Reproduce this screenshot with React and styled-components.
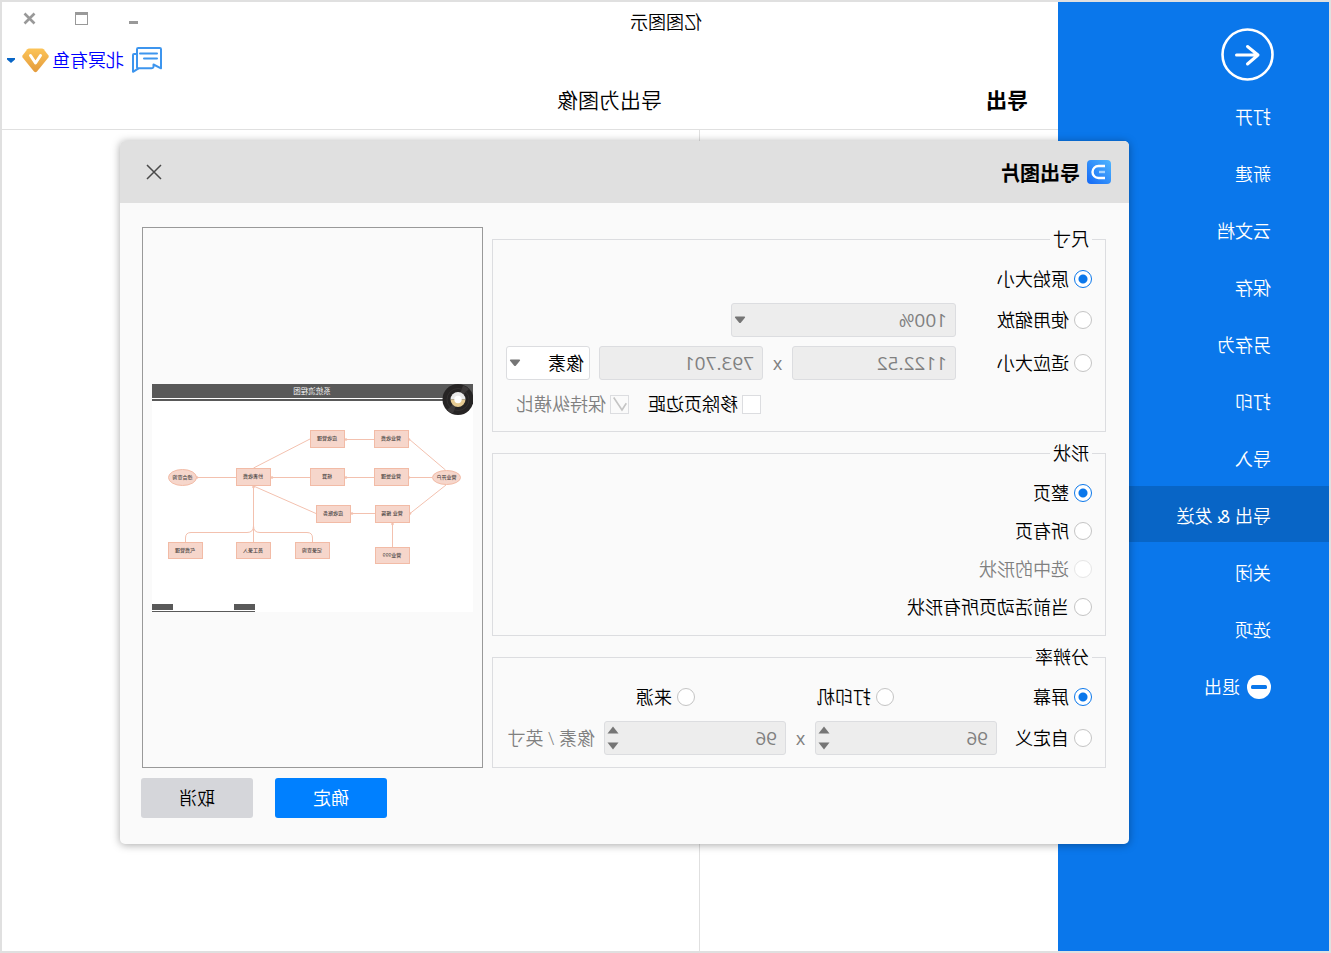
import React, { useState } from 'react';
import styled, { createGlobalStyle } from 'styled-components';

const GlobalStyle = createGlobalStyle`
  * {
    box-sizing: border-box;
  }

  body {
    margin: 0;
    background-color: #fff;
  }

  body, button, input, select {
    font-family: "Open Sans", "Noto Sans CJK SC", sans-serif;
    font-size: 18px;
    font-weight: 350;
    line-height: 24px;
  }
`;

// the whole window is shown flipped, everything inside is written left to right
const Window = styled.div`
  display: flex;
  position: relative;
  min-height: 100vh;
  border: 2px solid #e0e0e0;
  background-color: #fff;
  color: #000;
  transform: scaleX(-1);
`;

const Sidebar = styled.aside`
  flex: 0 0 271px;
  padding-top: 26px;
  background-color: #0a77eb;
`;

const BackButton = styled.button`
  display: block;
  margin: 0 0 6px 55px;
  padding: 0;
  border: none;
  background: none;
  line-height: 0;
`;

const MenuItem = styled.a`
  display: flex;
  align-items: center;
  gap: 7px;
  height: 56px;
  margin-bottom: 1px;
  padding: 4px 0 0 58px;
  background-color: ${(props) => (props.$active ? '#0865c6' : 'transparent')};
  color: #fff;
  text-decoration: none;
`;

const Ampersand = styled.span`
  font-weight: 400;
`;

const Main = styled.main`
  display: flex;
  flex-direction: column;
  flex: 1;
`;

const TitleBar = styled.div`
  display: flex;
  justify-content: space-between;
  height: 40px;
  padding: 0 2px 0 356px;
  line-height: 40px;
`;

const WindowButtons = styled.div`
  display: flex;
  height: 33px;
`;

const WindowButton = styled.button`
  display: flex;
  align-items: center;
  justify-content: center;
  width: 52px;
  padding: 0;
  border: none;
  background: none;
`;

const Account = styled.div`
  display: flex;
  align-items: center;
  justify-content: flex-end;
  gap: 3px;
  height: 36px;
  padding-right: 4px;
`;

const AccountLink = styled.a`
  margin-left: 5px;
  color: #0000ff;
  text-decoration: none;
`;

const Headings = styled.div`
  display: grid;
  grid-template-columns: 359px 1fr;
  height: 52px;
  border-bottom: 1px solid #e0e0e0;
`;

const Heading = styled.h1`
  margin: 0;
  padding-left: ${(props) => (props.$main ? '30px' : '37px')};
  font-size: 21px;
  font-weight: ${(props) => (props.$main ? 700 : 350)};
  line-height: 44px;
`;

const Columns = styled.div`
  display: grid;
  grid-template-columns: 359px 1fr;
  flex: 1;
`;

const ListColumn = styled.div`
  border-right: 1px solid #e0e0e0;
`;

const Dialog = styled.section`
  position: absolute;
  top: 139px;
  left: 200px;
  right: 118px;
  border-radius: 5px;
  background-color: #fafafa;
  box-shadow: 0 1px 8px rgba(0, 0, 0, 0.35);
`;

const DialogHeader = styled.header`
  display: flex;
  align-items: center;
  gap: 7px;
  height: 62px;
  padding: 0 26px 0 18px;
  border-radius: 5px 5px 0 0;
  background-color: #e0e0e0;
`;

const DialogTitle = styled.h2`
  flex: 1;
  margin: 0;
  padding-top: 3px;
  font-size: 20px;
  font-weight: 700;
`;

const CloseButton = styled.button`
  padding: 0;
  border: none;
  background: none;
  line-height: 0;
`;

const DialogBody = styled.div`
  display: flex;
  gap: 9px;
  padding: 24px 22px 0 23px;
`;

const Groups = styled.div`
  display: flex;
  flex-direction: column;
  flex: 1;
  gap: 9px;
  min-width: 0;
`;

const Group = styled.fieldset`
  min-width: 0;
  margin: 0;
  padding: 0 13px;
  border: 1px solid #dcdde0;
`;

const Legend = styled.legend`
  padding: 0 3px;
  line-height: 24px;
`;

const Rows = styled.div`
  display: flex;
  flex-direction: column;
  gap: ${(props) => (props.$list ? '0' : '9px')};
  padding: ${(props) => (props.$list ? '9px 0' : '12px 0')};
`;

const Row = styled.div`
  display: flex;
  align-items: center;
  min-height: ${(props) => (props.$tall ? '38px' : '31px')};
`;

const RadioLabel = styled.label`
  display: flex;
  align-items: center;
  flex: none;
  gap: 5px;
  width: ${(props) => props.$width || 'auto'};
  color: ${(props) => (props.$muted ? '#808080' : '#000')};
`;

const Radio = styled.input.attrs({ type: 'radio' })`
  appearance: none;
  flex: none;
  width: 18px;
  height: 18px;
  margin: 0;
  border: 1px solid #c4c4c4;
  border-radius: 50%;
  background-color: #fff;

  &:checked {
    border-color: #0a77eb;
    background-image: radial-gradient(circle, #0a77eb 4px, #fff 5px);
  }

  &:disabled {
    border-color: #e6e6e6;
  }
`;

const Checks = styled.div`
  display: flex;
  align-items: center;
  justify-content: flex-end;
  gap: 19px;
  height: 30px;
  padding-right: 10px;
`;

const CheckLabel = styled.label`
  display: flex;
  align-items: center;
  gap: 4px;
  color: ${(props) => (props.$muted ? '#808080' : '#000')};
`;

const CheckBox = styled.span`
  display: inline-grid;

  & > * {
    grid-area: 1 / 1;
  }
`;

const Check = styled.input.attrs({ type: 'checkbox' })`
  appearance: none;
  width: 19px;
  height: 19px;
  margin: 0;
  border: 1px solid #dcdde0;
  background-color: ${(props) => (props.disabled ? '#fafafa' : '#fff')};
`;

const Field = styled.div`
  display: grid;
  flex: none;
  width: ${(props) => props.$width};

  & > * {
    grid-area: 1 / 1;
  }

  & + & {
    margin-left: 9px;
  }
`;

const TextBox = styled.input`
  appearance: textfield;
  width: 100%;
  height: 34px;
  padding: 0 8px;
  border: 1px solid #dcdde0;
  border-radius: 3px;
  background-color: #ededed;
  color: #808080;
  font-size: 19px;
  font-weight: 400;

  &::-webkit-inner-spin-button {
    display: none;
  }
`;

const Select = styled.select`
  appearance: none;
  width: 100%;
  height: 34px;
  padding: 0 5px;
  border: 1px solid #dcdde0;
  border-radius: 3px;
  background-color: #fff;
  color: #000;

  &:disabled {
    padding: 0 8px;
    background-color: #ededed;
    color: #808080;
    font-size: 19px;
    font-weight: 400;
    opacity: 1;
  }
`;

const FieldArrow = styled.svg`
  place-self: center end;
  margin-right: 3px;
  pointer-events: none;
`;

const Spinner = styled.div`
  display: flex;
  flex-direction: column;
  align-items: center;
  justify-content: center;
  gap: 8px;
  place-self: center end;
  margin-right: 3px;
`;

const SpinButton = styled.button`
  padding: 0;
  border: none;
  background: none;
  line-height: 0;
`;

const Times = styled.span`
  flex: none;
  width: 29px;
  color: #808080;
  font-weight: 400;
  text-align: center;
`;

const Unit = styled.span`
  margin-left: 9px;
  color: #808080;
  white-space: nowrap;
`;

const Preview = styled.div`
  display: flex;
  align-items: center;
  flex: 0 0 341px;
  padding: 0 9px;
  border: 1px solid #999;

  svg {
    display: block;
    width: 100%;
  }
`;

const DialogFooter = styled.footer`
  display: flex;
  justify-content: flex-end;
  gap: 22px;
  padding: 10px 21px 26px;
`;

const ActionButton = styled.button`
  width: 112px;
  height: 40px;
  padding: 0;
  border: none;
  border-radius: 3px;
  background-color: ${(props) => (props.$primary ? '#0080ff' : '#d5d6da')};
  color: ${(props) => (props.$primary ? '#fff' : '#000')};
`;

const menuTop = ['打开', '新建', '云文档', '保存', '另存为', '打印', '导入'];

const menuBottom = ['关闭', '选项'];

const shapes = ['整页', '所有页', '选中的形状', '当前活动页所有形状'];

const resolutions = [
  { name: '屏幕', width: '198px' },
  { name: '打印机', width: '199px' },
  { name: '来源' },
];

// boxes of the flow chart: x, y, height, label
const boxes = [
  [64, 46, 18, '营业收费'],
  [128, 46, 18, '应收管理'],
  [64, 84, 18, '营业受理'],
  [128, 84, 18, '核算'],
  [202, 84, 18, '抄表收费'],
  [63, 121, 18, '营业 报装'],
  [122, 121, 18, '应收账务'],
  [63, 163, 17, '营业999'],
  [143, 158, 17, '记录查询'],
  [202, 158, 17, '员工录入'],
  [270, 158, 17, '气费管理'],
];

// small dots where the connectors end
const dots = [
  [64, 55.5], [64, 93.5], [63, 129.5], [127, 55.5], [127, 93.5],
  [201, 93.5], [121, 129.5], [80.5, 140], [219.5, 103], [276, 93.5],
];

const DownArrow = () => (
  <FieldArrow width="12" height="8" viewBox="0 0 12 8">
    <path d="M1.5 0.5h9q1 0.3 0.4 1.2L7 6.5q-1 1-2 0L1.1 1.7Q0.5 0.8 1.5 0.5z" fill="#757575" />
  </FieldArrow>
);

const SpinField = ({ label }) => {
  const [value, setValue] = useState(96);

  return (
    <Field $width="182px">
      <TextBox type="number" aria-label={label} value={value} onChange={(e) => setValue(e.target.value)} disabled />
      <Spinner>
        <SpinButton aria-label="+" disabled>
          <svg width="12" height="8" viewBox="0 0 12 8">
            <path d="M6 0.5L11.5 7.5H0.5z" fill="#757575" />
          </svg>
        </SpinButton>
        <SpinButton aria-label="-" disabled>
          <svg width="12" height="8" viewBox="0 0 12 8">
            <path d="M6 7.5L11.5 0.5H0.5z" fill="#757575" />
          </svg>
        </SpinButton>
      </Spinner>
    </Field>
  );
};

const FlowChart = () => (
  <svg viewBox="0 0 321 228">
    <rect width="321" height="228" fill="#fff" />
    <rect width="321" height="14" fill="#595959" />
    <rect y="15" width="321" height="2" fill="#595959" />
    <text x="161" y="9.500" textAnchor="middle" fontSize="7.5" fill="#fff">系统流程图</text>

    <g fill="none" stroke="#f3c1af" strokeWidth="1">
      <path d="M27.5 86L64 55M27 101L63 129.5M41 93.5H64M99 55.5H128M99 93.5H128M163 93.5H202M237 93.5H276M98 129.5H122" />
      <path d="M163 55L219.5 84M157 129.5L219.5 102M80.5 139V163M219.5 102V158" />
      <path d="M219.5 142Q219.5 148.5 226 148.5H282Q287.5 148.5 287.5 154V158" />
      <path d="M219.5 142Q219.5 148.5 213 148.5H166Q160.5 148.5 160.5 154V158" />
    </g>
    <g fill="#f3c1af">
      {dots.map(([x, y]) => (
        <circle key={`${x}-${y}`} cx={x} cy={y} r="1.3" />
      ))}
    </g>

    <g fill="#f6d6cb" stroke="#f2bba6" strokeWidth="1">
      <ellipse cx="26.5" cy="93.5" rx="14" ry="7" />
      <ellipse cx="290.5" cy="93.5" rx="14" ry="8" />
      {boxes.map(([x, y, h]) => (
        <rect key={`${x}-${y}`} x={x + 0.5} y={y + 0.5} width="34" height={h - 1} />
      ))}
    </g>
    <g fill="#4a4545" fontSize="5" fontWeight="500" textAnchor="middle">
      <text x="26.5" y="95">营业开户</text>
      <text x="290.5" y="95">综合查询</text>
      {boxes.map(([x, y, h, label]) => (
        <text key={`${x}-${y}`} x={x + 18} y={y + h / 2 + 1}>{label}</text>
      ))}
    </g>

    <g fill="#595959">
      <rect x="300" y="220" width="21" height="6" />
      <rect x="218" y="220" width="21" height="6" />
      <rect x="218" y="227" width="103" height="1" />
    </g>

    <circle cx="15" cy="15.5" r="15.5" fill="#262424" />
    <path d="M15 15.5L4 5A15 15 0 0 1 10 1.5zM15 15.5L26 26A15 15 0 0 1 20 29.5z" fill="#3d3a3a" />
    <circle cx="15" cy="15.5" r="11" fill="none" stroke="#3a3737" strokeWidth="0.7" />
    <path d="M7.5 15.5a7.5 7.5 0 0 1 15 0z" fill="#ebebeb" />
    <path d="M7.5 15.5a7.5 7.5 0 0 0 15 0z" fill="#e6cb92" />
    <circle cx="15" cy="15.5" r="3.7" fill="#fff" />
  </svg>
);

function App() {
  const [size, setSize] = useState('original');
  const [shape, setShape] = useState('整页');
  const [resolution, setResolution] = useState('屏幕');
  const [removeMargin, setRemoveMargin] = useState(false);

  return (
    <Window>
      <GlobalStyle />
      <Sidebar>
        <BackButton aria-label="返回">
          <svg width="53" height="53" viewBox="0 0 53 53" fill="none" stroke="#fff">
            <circle cx="26.5" cy="26.5" r="25" strokeWidth="2.6" />
            <path d="M37.5 27H16M26.5 18.5L16 27l10.500 9" strokeWidth="3" strokeLinecap="round" strokeLinejoin="round" />
          </svg>
        </BackButton>
        <nav>
          {menuTop.map((item) => (
            <MenuItem key={item} href="#">{item}</MenuItem>
          ))}
          <MenuItem href="#" $active>
            <span>导出 <Ampersand>&amp;</Ampersand> 发送</span>
          </MenuItem>
          {menuBottom.map((item) => (
            <MenuItem key={item} href="#">{item}</MenuItem>
          ))}
          <MenuItem href="#">
            <svg width="24" height="24" viewBox="0 0 24 24">
              <circle cx="12" cy="12" r="12" fill="#fff" />
              <rect x="4" y="10" width="16" height="4" rx="1.5" fill="#0a77eb" />
            </svg>
            退出
          </MenuItem>
        </nav>
      </Sidebar>

      <Main>
        <TitleBar>
          <span>亿图图示</span>
          <WindowButtons>
            <WindowButton aria-label="最小化">
              <svg width="13" height="13" viewBox="0 0 13 13"><path d="M2 10.5h9" stroke="#999" strokeWidth="3" /></svg>
            </WindowButton>
            <WindowButton aria-label="最大化">
              <svg width="13" height="13" viewBox="0 0 13 13">
                <rect x="0.5" y="0.5" width="12" height="12" fill="none" stroke="#999" />
                <rect width="13" height="3" fill="#999" />
              </svg>
            </WindowButton>
            <WindowButton aria-label="关闭">
              <svg width="13" height="13" viewBox="0 0 13 13"><path d="M1.5 1.5l10 10M11.5 1.5l-10 10" stroke="#999" strokeWidth="2.6" /></svg>
            </WindowButton>
          </WindowButtons>
        </TitleBar>

        <Account>
          <svg width="30" height="26" viewBox="0 0 30 26" fill="none" stroke="#3d95ee" strokeWidth="2" strokeLinejoin="round">
            <path d="M8.5 17.5L1 21.3V2.2Q1 1 2.2 1H23.8Q25 1 25 2.2V20.5Q25 21.3 24 21.3H10.5Q9 21.3 8.5 20z" />
            <path d="M25.5 7H28Q29 7 29 8V24.8L23.5 21.3" />
            <path d="M5 6.5H22M5 11.5H18" strokeLinecap="round" />
          </svg>
          <AccountLink href="#">北冥有鱼</AccountLink>
          <svg width="27" height="25" viewBox="0 0 27 25">
            <defs>
              <linearGradient id="vip" x1="0" y1="0" x2="0" y2="1">
                <stop offset="0" stopColor="#fcc458" />
                <stop offset="1" stopColor="#e39a3c" />
              </linearGradient>
            </defs>
            <path d="M7 0.5H20Q21 0.5 21.7 1.3L26.5 7.5Q27 8.5 26.4 9.4L15 23.5Q13.5 25 12 23.5L0.6 9.4Q0 8.5 0.5 7.5L5.3 1.3Q6 0.5 7 0.5z" fill="url(#vip)" />
            <path d="M8.5 7.5L13.5 15L18.5 7.5" fill="none" stroke="#fff" strokeWidth="3" strokeLinecap="round" strokeLinejoin="round" />
          </svg>
          <svg width="13" height="5" viewBox="-4 0 13 5"><path d="M0 0h8v1.5L4 5L0 1.5z" fill="#0865c6" /></svg>
        </Account>

        <Headings>
          <Heading $main>导出</Heading>
          <Heading as="h2">导出为图像</Heading>
        </Headings>
        <Columns>
          <ListColumn />
          <div />
        </Columns>
      </Main>

      <Dialog role="dialog" aria-labelledby="dialog-title">
        <DialogHeader>
          <svg width="24" height="24" viewBox="0 0 24 24">
            <defs>
              <linearGradient id="logo" x1="0" y1="0" x2="1" y2="1">
                <stop offset="0" stopColor="#4fb6ff" />
                <stop offset="1" stopColor="#1468f5" />
              </linearGradient>
            </defs>
            <rect width="24" height="24" rx="4" fill="url(#logo)" />
            <path d="M6 6h6.500a6 6 0 0 1 0 12H6" fill="none" stroke="#fff" strokeWidth="2.4" />
            <path d="M6 12h6" stroke="#a5d3ff" strokeWidth="2.4" />
          </svg>
          <DialogTitle id="dialog-title">导出图片</DialogTitle>
          <CloseButton aria-label="关闭">
            <svg width="16" height="16" viewBox="0 0 16 16"><path d="M1 1l14 14M15 1L1 15" stroke="#4a4a4a" strokeWidth="1.5" /></svg>
          </CloseButton>
        </DialogHeader>

        <DialogBody>
          <Groups>
            <Group>
              <Legend>尺寸</Legend>
              <Rows>
                <Row>
                  <RadioLabel>
                    <Radio name="size" checked={size === 'original'} onChange={() => setSize('original')} />
                    原始大小
                  </RadioLabel>
                </Row>
                <Row>
                  <RadioLabel $width="136px">
                    <Radio name="size" checked={size === 'scale'} onChange={() => setSize('scale')} />
                    使用缩放
                  </RadioLabel>
                  <Field $width="225px">
                    <Select aria-label="使用缩放" disabled>
                      <option>100%</option>
                    </Select>
                    <DownArrow />
                  </Field>
                </Row>
                <Row>
                  <RadioLabel $width="136px">
                    <Radio name="size" checked={size === 'fit'} onChange={() => setSize('fit')} />
                    适应大小
                  </RadioLabel>
                  <Field $width="164px">
                    <TextBox aria-label="宽" defaultValue="1122.52" disabled />
                  </Field>
                  <Times>x</Times>
                  <Field $width="164px">
                    <TextBox aria-label="高" defaultValue="793.701" disabled />
                  </Field>
                  <Field $width="84px">
                    <Select aria-label="单位">
                      <option>像素</option>
                    </Select>
                    <DownArrow />
                  </Field>
                </Row>
                <Checks>
                  <CheckLabel>
                    <Check checked={removeMargin} onChange={() => setRemoveMargin(!removeMargin)} />
                    移除页边距
                  </CheckLabel>
                  <CheckLabel $muted>
                    <CheckBox>
                      <Check defaultChecked disabled />
                      <svg width="19" height="19" viewBox="0 0 19 19">
                        <path d="M2.7 8.3L7 15L15.3 2.5" fill="none" stroke="#c4c4c4" strokeWidth="1.6" />
                      </svg>
                    </CheckBox>
                    保持纵横比
                  </CheckLabel>
                </Checks>
              </Rows>
            </Group>

            <Group>
              <Legend>形状</Legend>
              <Rows $list>
                {shapes.map((item) => (
                  <Row key={item} $tall>
                    <RadioLabel $muted={item === '选中的形状'}>
                      <Radio name="shape" checked={shape === item} onChange={() => setShape(item)} disabled={item === '选中的形状'} />
                      {item}
                    </RadioLabel>
                  </Row>
                ))}
              </Rows>
            </Group>

            <Group>
              <Legend>分辨率</Legend>
              <Rows>
                <Row>
                  {resolutions.map((item) => (
                    <RadioLabel key={item.name} $width={item.width}>
                      <Radio name="resolution" checked={resolution === item.name} onChange={() => setResolution(item.name)} />
                      {item.name}
                    </RadioLabel>
                  ))}
                </Row>
                <Row>
                  <RadioLabel $width="95px">
                    <Radio name="resolution" checked={resolution === 'custom'} onChange={() => setResolution('custom')} />
                    自定义
                  </RadioLabel>
                  <SpinField label="水平" />
                  <Times>x</Times>
                  <SpinField label="垂直" />
                  <Unit>像素 / 英寸</Unit>
                </Row>
              </Rows>
            </Group>
          </Groups>

          <Preview>
            <FlowChart />
          </Preview>
        </DialogBody>

        <DialogFooter>
          <ActionButton $primary>确定</ActionButton>
          <ActionButton>取消</ActionButton>
        </DialogFooter>
      </Dialog>
    </Window>
  );
}

export default App;
